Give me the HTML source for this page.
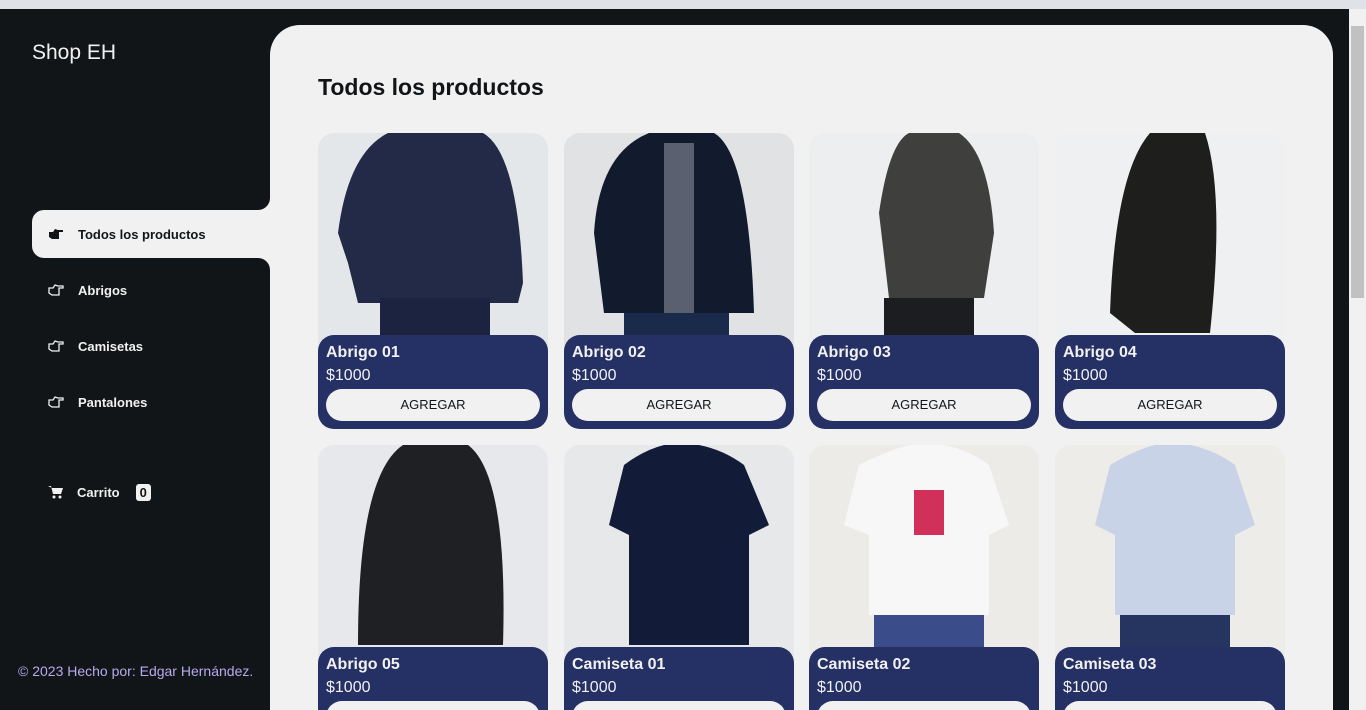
<!DOCTYPE html>
<html style="overflow:hidden;width:1366px;height:710px"><head><meta charset="utf-8"><style>
*{margin:0;padding:0;box-sizing:border-box}
body{width:1366px;height:710px;overflow:hidden;background:#111518;font-family:"Liberation Sans",sans-serif;position:relative}
.chrome{position:absolute;left:0;top:0;width:1366px;height:9px;background:#dfe3e8}
.logo{position:absolute;left:32px;top:41px;color:#f1f1f1;font-size:21px}
.nav{position:absolute;left:32px;height:48px;width:238px;display:flex;align-items:center;color:#f1f1f1;font-weight:bold;font-size:13px}
.nav svg{margin-left:16px;margin-right:14px}
.nav.active{background:#f1f1f1;color:#111518;border-radius:12px 0 0 12px}
.badge{background:#f1f1f1;color:#111518;border-radius:3px;padding:1px 4px;margin-left:16px;font-size:13px}
.foot{position:absolute;left:18px;top:663px;color:#b9a9ee;font-size:14px}
.main{position:absolute;left:270px;top:25px;width:1063px;height:685px;background:#f1f1f1;border-radius:30px 30px 0 0;overflow:hidden}
h1{position:absolute;left:48px;top:49px;font-size:23px;color:#111518}
.card{position:absolute;width:230px;height:296px}
.img{position:absolute;left:0;top:0;width:230px;height:220px;border-radius:16px 16px 0 0;overflow:hidden}
.info{position:absolute;left:0;top:202px;width:230px;height:94px;background:#253064;border-radius:16px;color:#f1f1f1;padding:9px 8px}
.info b{display:block;font-size:16px}
.info span{display:block;font-size:16px;margin-top:5px}
.btn{margin-top:4px;height:32px;border-radius:16px;background:#f1f1f1;color:#111518;text-align:center;line-height:32px;font-size:13px}
.scroll{position:absolute;left:1349px;top:9px;width:17px;height:701px;background:#f1f1f1}
.thumb{position:absolute;left:2px;top:17px;width:13px;height:272px;background:#c1c1c1}
.notch{position:absolute;width:12px;height:12px;left:258px;background:#f1f1f1}
.notch i{position:absolute;inset:0;background:#111518}
</style></head><body>
<div class="chrome"></div>
<div class="logo">Shop EH</div>
<div class="notch" style="top:198px"><i style="border-radius:0 0 12px 0"></i></div>
<div class="notch" style="top:258px"><i style="border-radius:0 12px 0 0"></i></div>
<div class="nav active" style="top:210px"><svg width="16" height="14" viewBox="0 0 16 14"><path d="M1 5h4l2-3 3 1h5v2h-4v7H4L1 10z" fill="#111518"/></svg>Todos los productos</div>
<div class="nav" style="top:266px"><svg width="16" height="14" viewBox="0 0 16 14"><path d="M1 5h4l2-3 3 1h5v2h-4v7H4L1 10z" fill="none" stroke="#f1f1f1" stroke-width="1.3"/></svg>Abrigos</div>
<div class="nav" style="top:322px"><svg width="16" height="14" viewBox="0 0 16 14"><path d="M1 5h4l2-3 3 1h5v2h-4v7H4L1 10z" fill="none" stroke="#f1f1f1" stroke-width="1.3"/></svg>Camisetas</div>
<div class="nav" style="top:378px"><svg width="16" height="14" viewBox="0 0 16 14"><path d="M1 5h4l2-3 3 1h5v2h-4v7H4L1 10z" fill="none" stroke="#f1f1f1" stroke-width="1.3"/></svg>Pantalones</div>
<div class="nav" style="top:468px"><svg width="15" height="14" viewBox="0 0 15 14"><path d="M0 1h3l2 8h8l2-6H4" fill="#f1f1f1"/><circle cx="6" cy="12" r="1.5" fill="#f1f1f1"/><circle cx="12" cy="12" r="1.5" fill="#f1f1f1"/></svg>Carrito<span class="badge">0</span></div>
<div class="foot">© 2023 Hecho por: Edgar Hernández.</div>
<div class="main">
<h1>Todos los productos</h1>
<div class="card" style="left:48px;top:108px"><div class="img"><svg width="230" height="220"><rect width="230" height="220" fill="#e4e7ea"/><path d="M20 100 Q30 20 70 0 H165 Q200 20 205 150 L200 170 H40 L30 130z" fill="#222a48"/><rect x="62" y="165" width="110" height="55" fill="#1b2340"/></svg></div><div class="info"><b>Abrigo 01</b><span>$1000</span><div class="btn">AGREGAR</div></div></div>
<div class="card" style="left:294px;top:108px"><div class="img"><svg width="230" height="220"><rect width="230" height="220" fill="#e1e2e4"/><path d="M30 100 Q35 20 85 0 H150 Q185 20 190 180 H40z" fill="#121a2e"/><rect x="100" y="10" width="30" height="170" fill="#5a6070"/><rect x="60" y="180" width="105" height="40" fill="#1a2a4a"/></svg></div><div class="info"><b>Abrigo 02</b><span>$1000</span><div class="btn">AGREGAR</div></div></div>
<div class="card" style="left:539px;top:108px"><div class="img"><svg width="230" height="220"><rect width="230" height="220" fill="#eceeef"/><path d="M70 80 Q80 10 100 0 H150 Q180 20 185 100 L175 165 H80z" fill="#3f403e"/><rect x="75" y="165" width="90" height="55" fill="#1c1d20"/></svg></div><div class="info"><b>Abrigo 03</b><span>$1000</span><div class="btn">AGREGAR</div></div></div>
<div class="card" style="left:785px;top:108px"><div class="img"><svg width="230" height="220"><rect width="230" height="220" fill="#eef0f1"/><path d="M55 180 Q60 40 95 0 H150 Q170 60 155 200 H80z" fill="#1e1f1c"/></svg></div><div class="info"><b>Abrigo 04</b><span>$1000</span><div class="btn">AGREGAR</div></div></div>
<div class="card" style="left:48px;top:420px"><div class="img"><svg width="230" height="220"><rect width="230" height="220" fill="#e6e8eb"/><path d="M40 200 Q40 30 85 0 H150 Q190 30 185 200z" fill="#1f2023"/></svg></div><div class="info"><b>Abrigo 05</b><span>$1000</span><div class="btn">AGREGAR</div></div></div>
<div class="card" style="left:294px;top:420px"><div class="img"><svg width="230" height="220"><rect width="230" height="220" fill="#e6e8ea"/><path d="M60 20 Q80 5 100 0 H135 Q160 5 180 20 L205 80 L185 90 V200 H65 V90 L45 80z" fill="#121b38"/></svg></div><div class="info"><b>Camiseta 01</b><span>$1000</span><div class="btn">AGREGAR</div></div></div>
<div class="card" style="left:539px;top:420px"><div class="img"><svg width="230" height="220"><rect width="230" height="220" fill="#ecebe8"/><path d="M50 20 Q80 5 100 0 H135 Q160 5 180 20 L200 80 L180 90 V170 H60 V90 L35 80z" fill="#f7f7f7"/><rect x="105" y="45" width="30" height="45" fill="#d0305a"/><rect x="65" y="170" width="110" height="50" fill="#3a4c8a"/></svg></div><div class="info"><b>Camiseta 02</b><span>$1000</span><div class="btn">AGREGAR</div></div></div>
<div class="card" style="left:785px;top:420px"><div class="img"><svg width="230" height="220"><rect width="230" height="220" fill="#eeece9"/><path d="M55 20 Q80 5 100 0 H135 Q160 5 180 20 L200 80 L180 90 V170 H60 V90 L40 80z" fill="#c8d3e8"/><rect x="65" y="170" width="110" height="50" fill="#253560"/></svg></div><div class="info"><b>Camiseta 03</b><span>$1000</span><div class="btn">AGREGAR</div></div></div>
</div>
<div class="scroll"><div class="thumb"></div></div>
</body></html>
